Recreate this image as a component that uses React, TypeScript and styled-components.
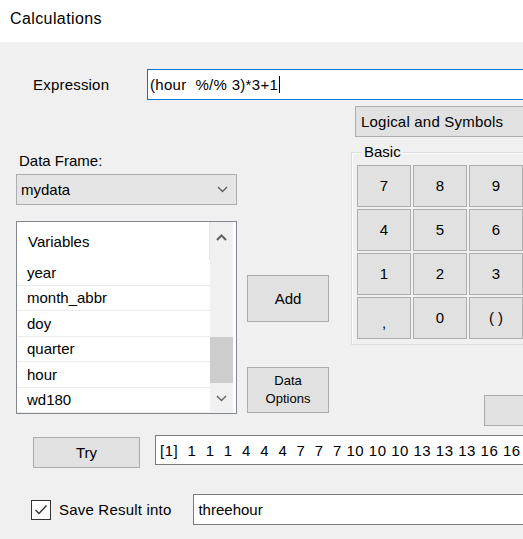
import React from "react";
import styled, { createGlobalStyle } from "styled-components";

const Global = createGlobalStyle`
  html, body { margin: 0; padding: 0; background: #f0f0f0; }
  body { font-family: "Liberation Sans", Arial, sans-serif; color: #000; }
  * { box-sizing: border-box; }
`;

const Frame = styled.div`
  width: 523px;
  height: 539px;
  overflow: hidden;
  background: #f0f0f0;
  font-size: 15px;
`;

const Inner = styled.div`
  width: 640px;
`;

const TitleBar = styled.div`
  height: 42px;
  background: #fff;
  padding-left: 10px;
  display: flex;
  align-items: center;
  font-size: 16px;
  letter-spacing: 0.4px;
  padding-bottom: 4px;
`;

const ExprRow = styled.div`
  display: flex;
  align-items: center;
  margin-top: 27px;
  height: 31px;
`;

const Label = styled.span<{ $w?: number; $pl?: number }>`
  display: inline-block;
  width: ${(p) => (p.$w ? `${p.$w}px` : "auto")};
  padding-left: ${(p) => p.$pl ?? 0}px;
  white-space: pre;
  letter-spacing: 0.2px;
`;

const TextBox = styled.div<{ $focus?: boolean; $w: number; $h: number; $pl?: number; $ls?: number }>`
  width: ${(p) => p.$w}px;
  height: ${(p) => p.$h}px;
  background: #fff;
  border: 1px solid ${(p) => (p.$focus ? "#0078d7" : "#7a7a7a")};
  display: flex;
  align-items: center;
  padding-left: ${(p) => p.$pl ?? 2}px;
  letter-spacing: ${(p) => p.$ls ?? 0}px;
  white-space: pre;
`;

const Caret = styled.span`
  display: inline-block;
  width: 1px;
  height: 17px;
  background: #000;
  margin-left: 1px;
`;

const Main = styled.div`
  display: flex;
  height: 324px;
`;

const LeftCol = styled.div`
  margin-left: 16px;
  width: 221px;
  display: flex;
  flex-direction: column;
  padding-top: 51px;
`;

const MidCol = styled.div`
  margin-left: 10px;
  width: 82px;
  display: flex;
  flex-direction: column;
  padding-top: 175px;
  gap: 45px;
`;

const RightCol = styled.div`
  margin-left: 22px;
  display: flex;
  flex-direction: column;
  padding-top: 6px;
`;

const FieldLabel = styled.div`
  height: 20px;
  line-height: 20px;
  padding-left: 3px;
`;

const Combo = styled.div`
  margin-top: 3px;
  height: 31px;
  background: #e5e5e5;
  border: 1px solid #adadad;
  display: flex;
  align-items: center;
  justify-content: space-between;
  padding: 0 8px 0 4px;
`;

const ListBox = styled.div`
  margin-top: 16px;
  height: 193px;
  background: #fff;
  border: 1px solid #828790;
  display: flex;
  padding-right: 3px;
`;

const ListItems = styled.div`
  flex: 1;
  display: flex;
  flex-direction: column;
`;

const ListHeader = styled.div`
  height: 38px;
  display: flex;
  align-items: center;
  padding-left: 11px;
  border-right: 1px solid #e6e6e6;
`;

const ListItem = styled.div`
  height: 25.5px;
  display: flex;
  align-items: center;
  padding-left: 10px;
  border-bottom: 1px solid #ebebeb;
  flex: none;
`;

const ScrollBar = styled.div`
  width: 23px;
  background: #f0f0f0;
  display: flex;
  flex-direction: column;
  align-items: center;
`;

const ScrollArrow = styled.div`
  height: 30px;
  width: 100%;
  display: flex;
  align-items: center;
  justify-content: center;
`;

const ScrollTrack = styled.div`
  flex: 1;
  width: 100%;
  display: flex;
  flex-direction: column;
  justify-content: flex-end;
`;

const Thumb = styled.div`
  height: 46px;
  background: #cdcdcd;
`;

const Button = styled.div<{ $w: number; $h: number; $small?: boolean }>`
  width: ${(p) => p.$w}px;
  height: ${(p) => p.$h}px;
  background: #e1e1e1;
  border: 1px solid #adadad;
  display: flex;
  align-items: center;
  justify-content: center;
  text-align: center;
  line-height: 18px;
  font-size: ${(p) => (p.$small ? 13 : 15)}px;
  flex: none;
`;

const LeftButton = styled(Button)`
  justify-content: flex-start;
  padding-left: 5px;
  margin-left: 4px;
  letter-spacing: 0.2px;
`;

const GroupBox = styled.div`
  position: relative;
  margin-top: 15px;
  border: 1px solid #dcdcdc;
  box-shadow: inset 1px 1px 0 #fff;
  padding: 12px 0 5px 5px;
  width: 200px;
`;

const Legend = styled.span`
  position: absolute;
  top: -10px;
  left: 10px;
  background: #f0f0f0;
  padding: 0 2px;
  line-height: 18px;
`;

const Keypad = styled.div`
  display: grid;
  grid-template-columns: repeat(3, 54px);
  grid-auto-rows: 42px;
  gap: 2px 2px;
`;

const Key = styled(Button)<{ $low?: boolean }>`
  align-items: ${(p) => (p.$low ? "flex-end" : "center")};
  padding-bottom: ${(p) => (p.$low ? "6px" : "0")};
`;

const PartialButton = styled(Button)`
  margin-top: 50px;
  margin-left: 133px;
`;

const TryRow = styled.div`
  display: flex;
  align-items: flex-start;
  margin-top: 11px;
`;

const SaveRow = styled.div`
  display: flex;
  align-items: center;
  margin-top: 26px;
`;

const Check = styled.div`
  width: 20px;
  height: 20px;
  border: 1px solid #333;
  background: #fff;
  margin-left: 31px;
  margin-right: 8px;
  display: flex;
  align-items: center;
  justify-content: center;
`;

const TryWrap = styled.div`
  margin-left: 33px;
  margin-top: 2px;
`;

const ResultWrap = styled.div`
  margin-left: 15px;
`;

const SaveWrap = styled.div`
  margin-left: 22px;
`;

const Chevron = ({ up }: { up?: boolean }) => (
  <svg width="11" height="7" viewBox="0 0 11 7">
    <path
      d={up ? "M1 6 L5.5 1.5 L10 6" : "M1 1 L5.5 5.5 L10 1"}
      fill="none"
      stroke="#606060"
      strokeWidth={up ? 2 : 1.4}
    />
  </svg>
);

const variables = ["year", "month_abbr", "doy", "quarter", "hour", "wd180"];

export default function App() {
  return (
    <Frame>
      <Global />
      <Inner>
        <TitleBar>Calculations</TitleBar>
        <ExprRow>
          <Label $w={147} $pl={33}>Expression</Label>
          <TextBox $focus $w={480} $h={31} $ls={0.3}>
            {"(hour  %/% 3)*3+1"}
            <Caret />
          </TextBox>
        </ExprRow>
        <Main>
          <LeftCol>
            <FieldLabel>Data Frame:</FieldLabel>
            <Combo>
              <span>mydata</span>
              <Chevron />
            </Combo>
            <ListBox>
              <ListItems>
                <ListHeader>Variables</ListHeader>
                {variables.map((v) => (
                  <ListItem key={v}>{v}</ListItem>
                ))}
              </ListItems>
              <ScrollBar>
                <ScrollArrow><Chevron up /></ScrollArrow>
                <ScrollTrack>
                  <Thumb />
                </ScrollTrack>
                <ScrollArrow><Chevron /></ScrollArrow>
              </ScrollBar>
            </ListBox>
          </LeftCol>
          <MidCol>
            <Button $w={82} $h={47}>Add</Button>
            <Button $w={82} $h={46} $small>Data<br />Options</Button>
          </MidCol>
          <RightCol>
            <LeftButton $w={200} $h={31}>Logical and Symbols</LeftButton>
            <GroupBox>
              <Legend>Basic</Legend>
              <Keypad>
                {["7", "8", "9", "4", "5", "6", "1", "2", "3"].map((k) => (
                  <Key key={k} $w={54} $h={42}>{k}</Key>
                ))}
                <Key $w={54} $h={42} $low>,</Key>
                <Key $w={54} $h={42}>0</Key>
                <Key $w={54} $h={42}>( )</Key>
              </Keypad>
            </GroupBox>
            <PartialButton $w={80} $h={31}> </PartialButton>
          </RightCol>
        </Main>
        <TryRow>
          <TryWrap>
            <Button $w={107} $h={31}>Try</Button>
          </TryWrap>
          <ResultWrap>
            <TextBox $w={420} $h={30} $pl={4} $ls={0.5}>
              {"[1]  1  1  1  4  4  4  7  7  7 10 10 10 13 13 13 16 16 16"}
            </TextBox>
          </ResultWrap>
        </TryRow>
        <SaveRow>
          <Check>
            <svg width="14" height="12" viewBox="0 0 14 12">
              <path d="M1.5 6 L5 9.5 L12.5 1.5" fill="none" stroke="#333" strokeWidth="1.4" />
            </svg>
          </Check>
          <Label>Save Result into</Label>
          <SaveWrap>
            <TextBox $w={400} $h={31} $pl={4}>threehour</TextBox>
          </SaveWrap>
        </SaveRow>
      </Inner>
    </Frame>
  );
}
